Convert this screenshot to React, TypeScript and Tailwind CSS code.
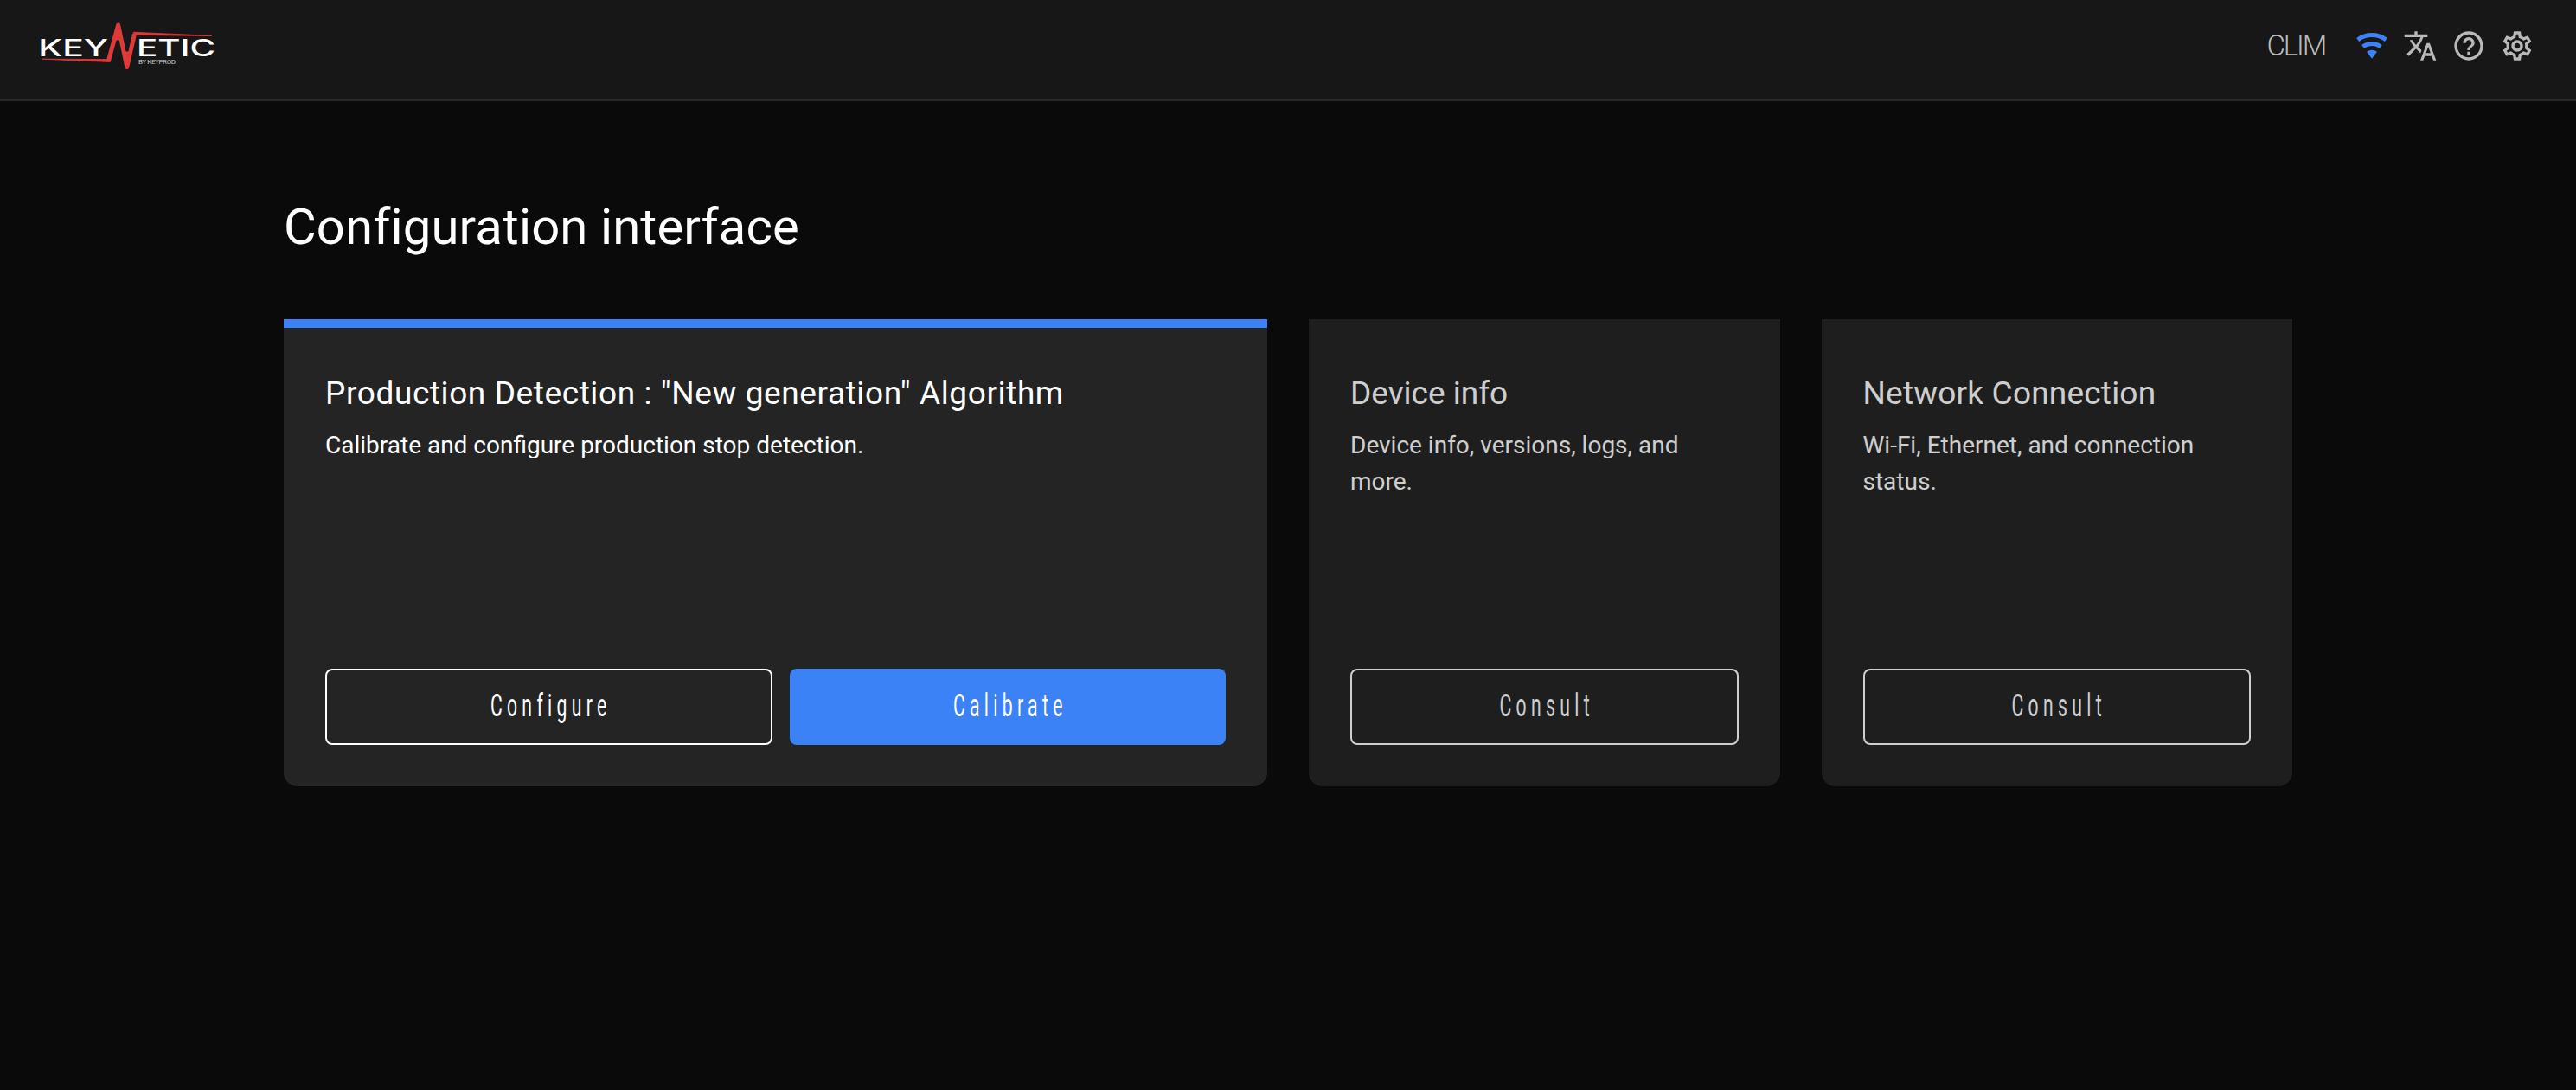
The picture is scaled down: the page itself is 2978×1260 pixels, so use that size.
import type { ReactNode } from "react";
import { MdHelpOutline, MdOutlineSettings, MdTranslate } from "react-icons/md";

function Logo() {
  return (
    <svg width="214" height="60" viewBox="-4 0 214 60" className="block" aria-label="Keynetic by Keyprod">
      <g fill="#ffffff" fontFamily="Inter, sans-serif" fontWeight="550">
        <text x="-1.8" y="39.8" fontSize="27" textLength="81" lengthAdjust="spacingAndGlyphs">KEY</text>
        <text x="112" y="39.8" fontSize="27" textLength="91" lengthAdjust="spacingAndGlyphs">ETIC</text>
      </g>
      <text x="114" y="49.4" fill="#c4c4c4" fontFamily="Roboto, sans-serif" fontSize="8" textLength="43" lengthAdjust="spacing">
        BY KEYPROD
      </text>
      <g fill="#df3a38" stroke="#df3a38" strokeLinejoin="round">
        <path d="M79.5 45 L90.7 4 L100.8 52.5 L109.6 14" fill="none" strokeWidth="5" />
        <path d="M90.7 4 L88 21 L94.2 21 Z M100.8 52.5 L98 35 L103.8 35 Z" />
        <path d="M3 43.2 L78.5 43.6 L81.5 46.4 L80 46.4 Z" strokeWidth="0.8" />
        <path d="M108 12.2 L199 16.4 L110.5 15.4 Z" strokeWidth="0.8" />
      </g>
    </svg>
  );
}

function WifiIcon() {
  return (
    <svg width="40" height="40" viewBox="0 0 40 40" className="block fill-[#3b82f6]">
      <path d="M2.18 10.94 A29.7 29.7 0 0 1 37.82 10.94 L34.82 14.94 A24.7 24.7 0 0 0 5.18 14.94 Z" />
      <path d="M8.18 18.94 A19.7 19.7 0 0 1 31.82 18.94 L28.88 22.86 A14.8 14.8 0 0 0 11.12 22.86 Z" />
      <path d="M14 26.7 A10 10 0 0 1 26 26.7 L20 34.7 Z" />
    </svg>
  );
}

function ActionButton({ children, variant = "outline" }: { children: string; variant?: "outline" | "solid" }) {
  return (
    <button
      className={
        variant === "solid"
          ? "flex h-[88px] items-center justify-center rounded-lg bg-[#3b82f6] text-white"
          : "flex h-[88px] items-center justify-center rounded-lg border-2 border-white text-white"
      }
    >
      <span className="mb-[3px] inline-block scale-x-[.57] pl-[9.2px] text-[37px] leading-[44px] tracking-[9.4px]">
        {children}
      </span>
    </button>
  );
}

interface CardProps {
  title: ReactNode;
  description: string;
  titleClass?: string;
  className: string;
  actions: ReactNode;
}

function Card({ title, description, titleClass = "", className, actions }: CardProps) {
  return (
    <section className={`flex h-[540px] flex-col rounded-b-2xl border-t-[10px] bg-[#242424] px-12 pt-[54px] pb-12 text-white ${className}`}>
      <h2 className={`text-[37px] leading-[44px] font-[450] whitespace-nowrap ${titleClass}`}>{title}</h2>
      <p className="mt-[17px] text-[28px] leading-[42px]">{description}</p>
      <div className="mt-auto">{actions}</div>
    </section>
  );
}

export default function App() {
  return (
    <div className="min-h-[1260px] bg-[#0a0a0a] font-['Roboto',sans-serif] text-white">
      <header className="flex h-[117px] items-start justify-between border-b-2 border-[#2a2a2a] bg-[#171717] px-12">
        <div className="-ml-1.5 pt-[25px]">
          <Logo />
        </div>
        <div className="flex items-center gap-4 pt-[33px] text-[#b9b9b9]">
          <span className="mr-[18px] text-[33px] leading-10 font-light tracking-[-2.2px]">CLIM</span>
          <WifiIcon />
          <MdTranslate size={40} />
          <MdHelpOutline size={40} />
          <MdOutlineSettings size={40} />
        </div>
      </header>
      <main className="mx-auto w-[2322px] pt-[109px]">
        <h1 className="text-[58px] leading-[72px] tracking-[.12px]">Configuration interface</h1>
        <div className="mt-[71px] grid grid-cols-4 gap-12">
          <Card
            title={'Production Detection : "New generation" Algorithm'}
            titleClass="tracking-[.6px]"
            description="Calibrate and configure production stop detection."
            className="col-span-2 border-[#3b82f6]"
            actions={
              <div className="grid grid-cols-[517fr_504fr] gap-5">
                <ActionButton>Configure</ActionButton>
                <ActionButton variant="solid">Calibrate</ActionButton>
              </div>
            }
          />
          <Card
            title="Device info"
            description="Device info, versions, logs, and more."
            className="border-[#242424] opacity-80"
            actions={
              <div className="grid">
                <ActionButton>Consult</ActionButton>
              </div>
            }
          />
          <Card
            title="Network Connection"
            titleClass="tracking-[.2px]"
            description="Wi-Fi, Ethernet, and connection status."
            className="border-[#242424] opacity-80"
            actions={
              <div className="grid">
                <ActionButton>Consult</ActionButton>
              </div>
            }
          />
        </div>
      </main>
    </div>
  );
}
